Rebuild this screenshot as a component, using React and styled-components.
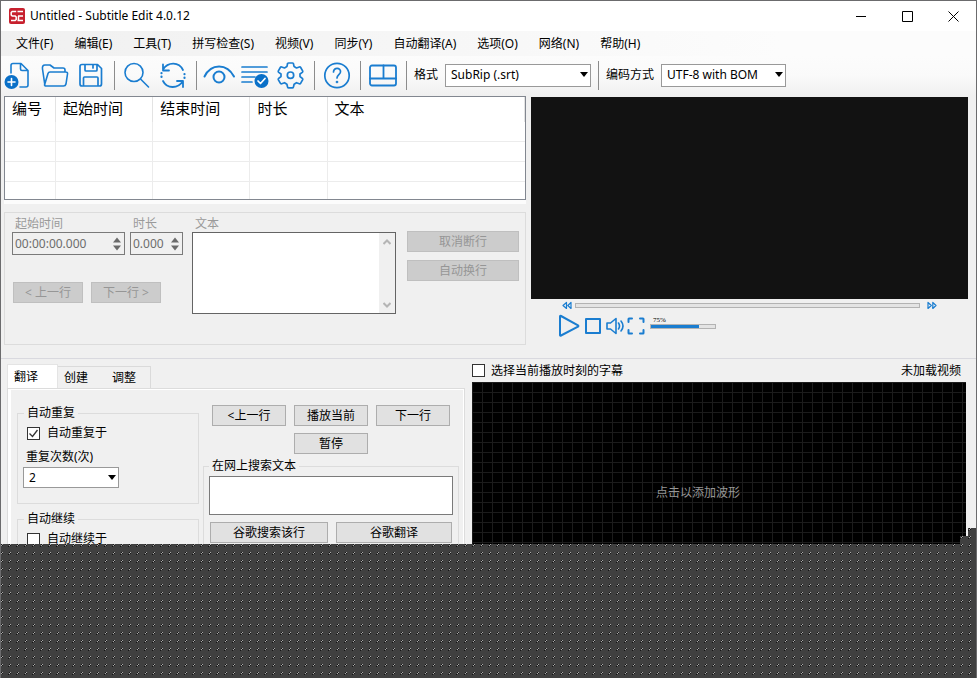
import React from 'react';
import styled, { createGlobalStyle } from 'styled-components';

const BLUE = '#1a7dd0';

const GlobalStyle = createGlobalStyle`
  * { box-sizing: border-box; }
  html, body, #root { height: 100%; margin: 0; }
  body { overflow: hidden; }
  body, button, input, select, textarea {
    font-family: "Noto Sans", "Noto Sans CJK SC", sans-serif;
    font-size: 12px;
    line-height: 16px;
    color: #000;
  }
`;

const Window = styled.div`
  position: relative;
  display: flex;
  flex-direction: column;
  height: 100%;
  overflow: hidden;
  background: #f0f0f0;
  border: 1px solid #6b6b6d;
  border-bottom: 0;
`;

const TitleBar = styled.header`
  flex: none;
  display: flex;
  align-items: center;
  gap: 5px;
  height: 30px;
  padding-left: 8px;
  background: #fff;
`;

const Title = styled.h1`
  flex: 1;
  margin: 0;
  font-size: 12px;
  font-weight: 400;
`;

const CaptionButtons = styled.div`
  display: flex;
`;

const CaptionButton = styled.button`
  display: grid;
  place-items: center;
  width: 46px;
  height: 28px;
  padding: 0;
  border: 0;
  background: none;
`;

const MenuBar = styled.nav`
  flex: none;
  display: flex;
  align-items: center;
  gap: 1px;
  height: 25px;
  padding-left: 5px;
  background: linear-gradient(90deg, #f0f0f0, #fcfcfc 80%);
`;

const MenuItem = styled.button`
  padding: 0 10px;
  border: 0;
  background: none;
  white-space: nowrap;
`;

const Toolbar = styled.div`
  flex: none;
  display: flex;
  align-items: center;
  height: 40px;
  padding-bottom: 2px;
  background: linear-gradient(#fcfcfc, #fafafa 50%, #f0f0f0);
`;

const ToolButton = styled.button`
  flex: none;
  display: grid;
  place-items: center;
  width: 36px;
  height: 36px;
  padding: 0;
  border: 0;
  background: none;
`;

const Separator = styled.span`
  flex: none;
  width: 1px;
  height: 29px;
  margin: 0 4px 0 5px;
  background: #8c8c8c;
`;

const ToolLabel = styled.label`
  display: flex;
  align-items: center;
  gap: 7px;
  margin: 0 2px 0 3px;
  white-space: nowrap;
`;

const SelectBox = styled.span`
  position: relative;
  display: block;
  width: ${(p) => p.$width}px;
  svg { position: absolute; right: 3px; top: 8px; pointer-events: none; }
`;

const Select = styled.select`
  display: block;
  appearance: none;
  width: 100%;
  height: ${(p) => (p.$compact ? 21 : 23)}px;
  padding: 0 5px;
  border: 1px solid #999;
  border-radius: 0;
  background: #fff;
`;

const Upper = styled.div`
  flex: none;
  display: grid;
  grid-template-columns: minmax(0, 522fr) minmax(0, 437fr);
  gap: 5px;
  padding: 0 8px 0 3px;
`;

const Column = styled.div`
  display: flex;
  flex-direction: column;
`;

const ListFrame = styled.div`
  height: 104px;
  overflow: hidden;
  border: 1px solid #828790;
  background: #fff;
`;

const SubtitleTable = styled.table`
  width: 100%;
  table-layout: fixed;
  border-collapse: separate;
  border-spacing: 0;
  th {
    height: 25px;
    padding: 0 7px 3px;
    border-right: 1px solid #e3e3e3;
    font-size: 15px;
    font-weight: 400;
    line-height: 20px;
    text-align: left;
    vertical-align: middle;
  }
  td {
    height: 20px;
    padding: 0;
    border-right: 1px solid #ececec;
    border-bottom: 1px solid #ececec;
  }
  td:last-child { border-right: 0; }
`;

const Col = styled.col`
  width: ${(p) => p.$width}px;
`;

const ListEdge = styled.div`
  height: 4px;
  background: #fcfcfc;
`;

const EditPanel = styled.section`
  display: flex;
  align-items: flex-start;
  height: 133px;
  margin-top: 8px;
  padding: 3px 6px 0 7px;
  border: 1px solid #dcdcdc;
`;

const TimeBlock = styled.div`
  display: grid;
  grid-template-columns: 113px 53px;
  column-gap: 5px;
  margin-right: 9px;
`;

const Field = styled.label`
  display: flex;
  flex-direction: column;
  color: #9a9a9a;
`;

const Caption = styled.span`
  padding-left: 3px;
  height: 16px;
`;

const Spinner = styled.span`
  display: flex;
  align-items: center;
  height: 23px;
  padding-right: 3px;
  border: 1px solid #7a7a7a;
  input {
    flex: 1;
    min-width: 0;
    padding: 0 2px;
    border: 0;
    background: none;
    color: #6d6d6d;
  }
`;

const StepRow = styled.div`
  grid-column: 1 / -1;
  display: flex;
  gap: 8px;
  margin-top: 27px;
  padding-left: 1px;
`;

const TextField = styled(Field)`
  flex: 1;
`;

const TextBox = styled.span`
  display: flex;
  height: 82px;
  border: 1px solid #646464;
  background: #fff;
`;

const TextInput = styled.textarea`
  flex: 1;
  min-width: 0;
  border: 0;
  resize: none;
  background: #fff;
`;

const ScrollTrack = styled.span`
  display: flex;
  flex-direction: column;
  justify-content: space-between;
  align-items: center;
  width: 16px;
  padding: 6px 0 5px;
  background: #f0f0f0;
`;

const BreakButtons = styled.div`
  display: flex;
  flex-direction: column;
  gap: 8px;
  width: 112px;
  margin: 15px 0 0 11px;
`;

const Button = styled.button`
  width: ${(p) => (p.$width ? `${p.$width}px` : 'auto')};
  height: 21px;
  padding: 1px 0 0;
  border: 1px solid #adadad;
  background: #e1e1e1;
  white-space: nowrap;
  &:disabled {
    border-color: #bfbfbf;
    background: #ccc;
    color: #969696;
  }
`;

const Screen = styled.div`
  height: 202px;
  margin-top: 1px;
  background: #121212;
`;

const SeekRow = styled.div`
  display: flex;
  align-items: center;
  gap: 3px;
  height: 13px;
  padding: 0 31px;
`;

const Range = styled.input`
  appearance: none;
  flex: ${(p) => (p.$width ? 'none' : 1)};
  width: ${(p) => (p.$width ? `${p.$width}px` : 'auto')};
  min-width: 0;
  height: 5px;
  margin: 0;
  border: 1px solid #b3b3b3;
  background: linear-gradient(90deg, ${BLUE} ${(p) => p.$fill}%, #e4e4e4 ${(p) => p.$fill}%);
  &::-webkit-slider-thumb { appearance: none; width: 1px; height: 1px; }
`;

const PlayerRow = styled.div`
  display: flex;
  align-items: center;
  height: 28px;
  padding-left: 26px;
`;

const PlayerButton = styled.button`
  display: grid;
  place-items: center;
  width: ${(p) => p.$width}px;
  height: 26px;
  padding: 0;
  border: 0;
  background: none;
`;

const Volume = styled.label`
  display: flex;
  flex-direction: column;
  margin: 0 0 7px 3px;
  font-family: "Liberation Serif", serif;
  font-size: 7px;
  line-height: 8px;
  span { padding-left: 3px; }
`;

const Lower = styled.div`
  flex: 1;
  display: grid;
  grid-template-columns: 464px minmax(0, 1fr);
  margin-top: 13px;
  padding-right: 10px;
  border-top: 1px solid #d9d9df;
`;

const TabArea = styled.section`
  display: flex;
  flex-direction: column;
  padding: 5px 0 0 6px;
`;

const TabList = styled.div`
  display: flex;
  align-items: flex-end;
  height: 24px;
`;

const Tab = styled.button`
  width: ${(p) => (p.$active ? 51 : 47)}px;
  height: ${(p) => (p.$active ? 24 : 22)}px;
  margin-right: ${(p) => (p.$active ? 0 : -1)}px;
  padding: 0 0 0 ${(p) => (p.$active ? 6 : 6)}px;
  border: 1px solid ${(p) => (p.$active ? '#e4e4e4' : '#dadada')};
  border-bottom: 0;
  border-left-width: ${(p) => (p.$active ? 1 : 0)}px;
  background: ${(p) => (p.$active ? '#fff' : '#f0f0f0')};
  text-align: left;
  & + & + & { padding-left: 8px; }
`;

const TabPanel = styled.div`
  flex: 1;
  display: flex;
  gap: 4px;
  align-items: flex-start;
  padding: 16px 5px 0 7px;
  border: 1px solid #dcdcdc;
  box-shadow: inset 3px 1px 0 #fff, inset -1px 0 0 #fff;
`;

const Groups = styled.div`
  flex: none;
  display: flex;
  flex-direction: column;
  gap: 7px;
  width: 182px;
  margin-left: 2px;
`;

const Group = styled.fieldset`
  min-width: 0;
  min-height: ${(p) => p.$height}px;
  margin: 0;
  padding: ${(p) => p.$top || 0}px 5px 0;
  border: 1px solid #dcdcdc;
  legend { margin-left: ${(p) => p.$indent}px; padding: 0 3px; }
`;

const CheckLabel = styled.label`
  display: flex;
  align-items: center;
  gap: ${(p) => p.$gap}px;
  height: 16px;
  margin-left: ${(p) => p.$indent}px;
`;

const Check = styled.span`
  position: relative;
  display: block;
  width: 13px;
  height: 13px;
  input {
    appearance: none;
    display: block;
    width: 13px;
    height: 13px;
    margin: 0;
    border: 1px solid #333;
    background: #fff;
  }
  svg { position: absolute; left: 1px; top: 1px; display: none; }
  input:checked + svg { display: block; }
`;

const CountField = styled.label`
  display: flex;
  flex-direction: column;
  gap: 2px;
  margin-top: 8px;
`;

const CountCaption = styled.span`
  padding-left: 3px;
`;

const Playback = styled.div`
  flex: 1;
  min-width: 0;
`;

const PlayButtons = styled.div`
  display: grid;
  grid-template-columns: repeat(3, 74px);
  gap: 7px 8px;
  margin: 0 0 4px 9px;
  button:last-child { grid-column: 2; }
`;

const SearchBox = styled.textarea`
  display: block;
  width: 100%;
  height: 39px;
  border: 1px solid #7a7a7a;
  background: #fff;
  resize: none;
`;

const SearchButtons = styled.div`
  display: grid;
  grid-template-columns: 118px 116px;
  gap: 8px;
  margin: 7px 0 0 1px;
`;

const WaveArea = styled.section`
  display: flex;
  flex-direction: column;
  padding: 2px 0 0 7px;
`;

const WaveHeader = styled.div`
  display: flex;
  justify-content: space-between;
  align-items: center;
  height: 19px;
  margin-bottom: 2px;
  padding-right: 5px;
`;

const Wave = styled.div`
  flex: 1;
  padding: 103px 0 0 184px;
  background-color: #000;
  background-image: linear-gradient(#1c1c1c 1px, transparent 1px),
    linear-gradient(90deg, #1c1c1c 1px, transparent 1px);
  background-size: 10px 10px;
  color: #969696;
`;

/* Dithered shade lying over the lower part of the window, stepped at its right end */
const Shade = styled.div`
  position: absolute;
  left: -1px;
  right: -1px;
  bottom: 0;
  height: 150px;
  clip-path: polygon(
    0 16px, calc(100% - 17px) 16px, calc(100% - 17px) 8px,
    calc(100% - 9px) 8px, calc(100% - 9px) 0, 100% 0, 100% 100%, 0 100%
  );
  svg { display: block; width: 100%; height: 100%; }
`;

const Icon = ({ size = 28, w = size, h = size, children, sw = 2 }) => (
  <svg width={w} height={h} viewBox={`0 0 ${w} ${h}`} fill="none" stroke={BLUE} strokeWidth={sw} strokeLinecap="round" strokeLinejoin="round" aria-hidden="true">
    {children}
  </svg>
);

const Logo = () => (
  <svg width="16" height="16" viewBox="0 0 16 16" aria-hidden="true">
    <rect width="16" height="16" rx="2" fill="#c7202e" />
    <g fill="none" stroke="#fff" strokeWidth="1.5">
      <path d="M7.200 3.500H3.200L2.200 4.500v2.500l1 1h3l1 1v2.500l-1 1H2" />
      <path d="M8.500 3.500H14M9 8h5M8.500 12.500H14M9.500 8v4" />
    </g>
  </svg>
);

const DropArrow = () => (
  <svg width="8" height="5" viewBox="0 0 8 5" aria-hidden="true"><path d="M0 0h8L4 5z" fill="#000" /></svg>
);

const SpinArrows = () => (
  <svg width="8" height="14" viewBox="0 0 8 14" fill="#6a6a6a" aria-hidden="true">
    <path d="M0 5.500 4 .5l4 5zM0 8.500l4 5 4-5z" />
  </svg>
);

const Chevron = ({ down }) => (
  <svg width="8" height="6" viewBox="0 0 8 6" fill="none" stroke="#b5b5b5" strokeWidth="2" aria-hidden="true">
    <path d={down ? 'M.5 1 4 4.500 7.500 1' : 'M.5 5 4 1.500 7.500 5'} />
  </svg>
);

const icons = {
  new: (
    <Icon w={34} sw={1.6}>
      <path d="M9 12V4.500Q9 2.500 11 2.500h8l7 7V24q0 2-2 2h-6M18.500 3v5q0 1.500 1.500 1.500h5.500" />
      <circle cx="9.500" cy="21" r="7" fill="#0a70c8" stroke="none" />
      <path d="M6 21h7M9.500 17.500v7" stroke="#fff" />
    </Icon>
  ),
  open: (
    <Icon sw={1.6}>
      <path d="M4 25 1.500 8Q1 4 4 4h5l4 3h9q2 0 2 2v2M3.500 24 7 12.500Q7.500 11 9 11h15.500q2.500 0 2 2L25 23q-.5 2-2.500 2H5q-1.500 0-1.500-1" />
    </Icon>
  ),
  save: (
    <Icon sw={1.7}>
      <path d="M3 5.500q0-2 2-2h15.500l4 4V23q0 2-2 2H5q-2 0-2-2zM8 3.500V9q0 1 1 1h10q1 0 1-1V3.500M16 3.500V7M6.500 25v-8q0-1 1-1H20q1 0 1 1v8" />
    </Icon>
  ),
  search: (
    <Icon sw={1.6}><circle cx="11" cy="11.500" r="9" /><path d="m18 18.500 7.500 7.500" /></Icon>
  ),
  replace: (
    <Icon sw={1.8}>
      <path d="M4 8.500C9 .5 20 .5 24 9M4 3.500v6h6M24 20C19 28 8 28 4 20M24 26v-6h-6" />
      <path d="M25.500 13v5M2.500 12v5" strokeDasharray=".2 3.500" strokeWidth="2.200" />
    </Icon>
  ),
  view: (
    <Icon w={34} sw={2}>
      <path d="M2.500 15.500C9 2 25 2 32 15.500" /><circle cx="17" cy="16" r="5.500" />
    </Icon>
  ),
  check: (
    <Icon w={30} sw={1.7}>
      <path d="M2 6h25M2 11h25M2 16h13M2 21h10" />
      <circle cx="21.500" cy="20" r="7" fill="#0a70c8" stroke="none" />
      <path d="m18 20 2.500 2.500 4.500-5" stroke="#fff" />
    </Icon>
  ),
  settings: (
    <Icon sw={1.7}>
      <path d="M11.500 2h4q1 0 1 1l.6 2.600 2.400 1.400 2.800-1q1-.2 1.400.5l1.900 3.300q.4.900-.3 1.600L23 13v2.500l2.300 1.900q.7.600.3 1.400l-1.900 3.400q-.5.800-1.400.5l-2.800-1-2.400 1.500-.6 2.600q0 1-1 1h-4q-1 0-1-1l-.6-2.600-2.400-1.500-2.800 1q-1 .3-1.400-.5l-1.900-3.400q-.4-.8.300-1.400L4 15.500V13l-2.300-1.600q-.7-.7-.3-1.600l1.900-3.300q.4-.7 1.400-.5l2.800 1 2.400-1.400.6-2.600q0-1 1-1z" />
      <circle cx="13.500" cy="14.200" r="3.200" />
    </Icon>
  ),
  help: (
    <Icon sw={1.7}>
      <circle cx="14" cy="14.500" r="12.200" /><path d="M10.500 11c0-5 7.500-4.500 7 0-.3 2.500-3.500 3-3.500 6" /><circle cx="14" cy="21" r=".5" />
    </Icon>
  ),
  layout: (
    <Icon w={30} sw={1.8}>
      <rect x="2" y="4.500" width="26" height="20" rx="2" /><path d="M2 17.500h26M15.500 4.500v13" />
    </Icon>
  ),
};

const toolGroups = [
  [['new', '新建'], ['open', '打开'], ['save', '保存']],
  [['search', '查找'], ['replace', '替换']],
  [['view', '可视化同步'], ['check', '拼写检查'], ['settings', '设置']],
  [['help', '帮助']],
  [['layout', '布局']],
];

const menus = ['文件(F)', '编辑(E)', '工具(T)', '拼写检查(S)', '视频(V)', '同步(Y)', '自动翻译(A)', '选项(O)', '网络(N)', '帮助(H)'];
const columns = [['编号', 51], ['起始时间', 97], ['结束时间', 97], ['时长', 77], ['文本', 197]];
const captionGlyphs = [['最小化', 'M0 5.500h10'], ['最大化', 'M.5.500h10v10H.5z'], ['关闭', 'm.5.500 10 10m0-10-10 10']];

function CheckBox({ label, checked, gap = 7, indent = 4 }) {
  return (
    <CheckLabel $gap={gap} $indent={indent}>
      <Check>
        <input type="checkbox" defaultChecked={checked} />
        <svg width="11" height="11" viewBox="0 0 11 11" fill="none" stroke="#333" strokeWidth="1.300"><path d="m1.500 5.500 3 3 5-6.500" /></svg>
      </Check>
      {label}
    </CheckLabel>
  );
}

function DropDown({ options, width, compact }) {
  return (
    <SelectBox $width={width}>
      <Select $compact={compact}>{options.map((o) => <option key={o}>{o}</option>)}</Select>
      <DropArrow />
    </SelectBox>
  );
}

export default function App() {
  return (
    <>
      <GlobalStyle />
      <Window>
        <TitleBar>
          <Logo />
          <Title>Untitled - Subtitle Edit 4.0.12</Title>
          <CaptionButtons>
            {captionGlyphs.map(([name, d]) => (
              <CaptionButton key={name} aria-label={name}>
                <svg width="11" height="11" viewBox="0 0 11 11" fill="none" stroke="#000"><path d={d} /></svg>
              </CaptionButton>
            ))}
          </CaptionButtons>
        </TitleBar>
        <MenuBar>{menus.map((m) => <MenuItem key={m}>{m}</MenuItem>)}</MenuBar>
        <Toolbar>
          {toolGroups.map((group) => (
            <React.Fragment key={group[0][0]}>
              {group.map(([id, name]) => <ToolButton key={id} aria-label={name}>{icons[id]}</ToolButton>)}
              <Separator />
            </React.Fragment>
          ))}
          <ToolLabel>格式<DropDown width={146} options={['SubRip (.srt)']} /></ToolLabel>
          <Separator />
          <ToolLabel>编码方式<DropDown width={125} options={['UTF-8 with BOM']} /></ToolLabel>
        </Toolbar>

        <Upper>
          <Column>
            <ListFrame>
              <SubtitleTable>
                <colgroup>{columns.map(([name, w]) => <Col key={name} $width={w} />)}</colgroup>
                <thead><tr>{columns.map(([name]) => <th key={name}>{name}</th>)}</tr></thead>
                <tbody>
                  {[0, 1, 2, 3].map((r) => <tr key={r}>{columns.map(([name]) => <td key={name} />)}</tr>)}
                </tbody>
              </SubtitleTable>
            </ListFrame>
            <ListEdge />
            <EditPanel>
              <TimeBlock>
                <Field><Caption>起始时间</Caption><Spinner><input disabled defaultValue="00:00:00.000" /><SpinArrows /></Spinner></Field>
                <Field><Caption>时长</Caption><Spinner><input disabled defaultValue="0.000" /><SpinArrows /></Spinner></Field>
                <StepRow>
                  <Button disabled $width={70}>&lt; 上一行</Button>
                  <Button disabled $width={70}>下一行 &gt;</Button>
                </StepRow>
              </TimeBlock>
              <TextField>
                <Caption>文本</Caption>
                <TextBox><TextInput disabled /><ScrollTrack><Chevron /><Chevron down /></ScrollTrack></TextBox>
              </TextField>
              <BreakButtons><Button disabled>取消断行</Button><Button disabled>自动换行</Button></BreakButtons>
            </EditPanel>
          </Column>

          <Column>
            <Screen />
            <SeekRow>
              <Icon w={10} h={9} sw={1.2}><path d="M4.500 1.500v6L1 4.500zM9 1.500v6L5.800 4.500z" /></Icon>
              <Range type="range" aria-label="播放位置" defaultValue={0} $fill={0} />
              <Icon w={14} h={9} sw={1.2}><path d="M5 1.500v6L8.300 4.500zM9.800 1.500v6L13 4.500z" /></Icon>
            </SeekRow>
            <PlayerRow>
              <PlayerButton $width={24} aria-label="播放"><Icon w={24} h={24}><path d="M3 2.500v18.500q0 1 1 .5l17-8.800q.8-.7 0-1.300L4 2q-1-.5-1 .5z" /></Icon></PlayerButton>
              <PlayerButton $width={24} aria-label="停止"><Icon w={18} h={18}><rect x="2" y="2" width="14" height="14" /></Icon></PlayerButton>
              <PlayerButton $width={20} aria-label="静音"><Icon w={18} h={18} sw={1.6}><path d="M1 6h3.500l5.500-4.500v15L4.500 12H1zM12.500 6q2 3 0 6M15 4q4 5 0 10" /></Icon></PlayerButton>
              <PlayerButton $width={22} aria-label="全屏"><Icon w={18} h={18}><path d="M1.500 5V2q0-.5.5-.5h3M13 1.500h3q.5 0 .5.500v3M16.500 13v3q0 .5-.5.500h-3M5 16.500H2q-.5 0-.5-.5v-3" /></Icon></PlayerButton>
              <Volume><span>75%</span><Range type="range" defaultValue={75} $fill={75} $width={66} /></Volume>
            </PlayerRow>
          </Column>
        </Upper>

        <Lower>
          <TabArea>
            <TabList role="tablist">
              <Tab role="tab" aria-selected="true" $active>翻译</Tab>
              <Tab role="tab">创建</Tab>
              <Tab role="tab">调整</Tab>
            </TabList>
            <TabPanel>
              <Groups>
                <Group $height={99} $indent={1} $top={4}>
                  <legend>自动重复</legend>
                  <CheckBox label="自动重复于" checked />
                  <CountField>
                    <CountCaption>重复次数(次)</CountCaption>
                    <DropDown compact width={96} options={['2', '3', '4', '5']} />
                  </CountField>
                </Group>
                <Group $height={99} $indent={1} $top={4}>
                  <legend>自动继续</legend>
                  <CheckBox label="自动继续于" />
                </Group>
              </Groups>
              <Playback>
                <PlayButtons>
                  <Button>&lt;上一行</Button><Button>播放当前</Button><Button>下一行</Button><Button>暂停</Button>
                </PlayButtons>
                <Group $height={140} $indent={0} $top={2}>
                  <legend>在网上搜索文本</legend>
                  <SearchBox aria-label="在网上搜索文本" />
                  <SearchButtons><Button>谷歌搜索该行</Button><Button>谷歌翻译</Button></SearchButtons>
                </Group>
              </Playback>
            </TabPanel>
          </TabArea>
          <WaveArea>
            <WaveHeader><CheckBox label="选择当前播放时刻的字幕" gap={6} indent={0} /><span>未加载视频</span></WaveHeader>
            <Wave>点击以添加波形</Wave>
          </WaveArea>
        </Lower>

        <Shade>
          <svg aria-hidden="true">
            <defs>
              <pattern id="dither" width="8" height="8" patternUnits="userSpaceOnUse" shapeRendering="crispEdges">
                <rect width="8" height="8" fill="#404040" />
                <path d="M2 0h1v1h-1zM1 1h1v1h-1z" fill="#a8a8a8" />
                <path d="M1 0h1v1h-1zM2 1h1v1h-1zM0 2h1v1h-1z" fill="#151515" />
              </pattern>
            </defs>
            <rect width="100%" height="100%" fill="url(#dither)" />
          </svg>
        </Shade>
      </Window>
    </>
  );
}
